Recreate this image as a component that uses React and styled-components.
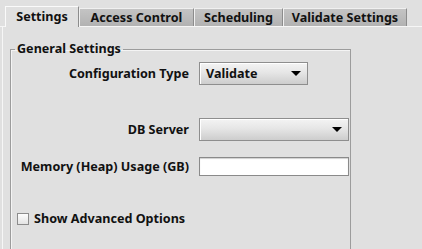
import styled, { createGlobalStyle } from "styled-components";

const GlobalStyle = createGlobalStyle`
  html, body {
    margin: 0;
    padding: 0;
    background: #e0e0e0;
  }
  * {
    box-sizing: border-box;
  }
`;

const tabs = [
  { label: "Settings", width: 74 },
  { label: "Access Control", width: 115 },
  { label: "Scheduling", width: 89 },
  { label: "Validate Settings", width: 124 },
];

function App() {
  return (
    <Page>
      <GlobalStyle />
      <TabStrip>
        {tabs.map((t, i) => (
          <Tab key={t.label} $active={i === 0} $width={t.width}>
            {t.label}
          </Tab>
        ))}
      </TabStrip>
      <Panel>
        <Group>
          <Legend>General Settings</Legend>
          <Row $top={5}>
            <Label>Configuration Type</Label>
            <Combo $width={109}>
              <span>Validate</span>
              <Arrow />
            </Combo>
          </Row>
          <Row $top={33}>
            <Label>DB Server</Label>
            <Combo $width={150}>
              <span></span>
              <Arrow />
            </Combo>
          </Row>
          <Row $top={16}>
            <Label>Memory (Heap) Usage (GB)</Label>
            <TextField />
          </Row>
          <CheckRow>
            <CheckBox />
            <span>Show Advanced Options</span>
          </CheckRow>
        </Group>
      </Panel>
    </Page>
  );
}

export default App;

const Page = styled.div`
  width: 422px;
  height: 249px;
  overflow: hidden;
  background: #e0e0e0;
  font-family: "Noto Sans", "DejaVu Sans", sans-serif;
  font-weight: 700;
  font-size: 12.6px;
  color: #111;
`;

const TabStrip = styled.div`
  display: flex;
  align-items: flex-end;
  height: 27px;
  padding-left: 5px;
  border-bottom: 1px solid #f6f6f6;
`;

const Tab = styled.div`
  width: ${(p) => p.$width}px;
  height: ${(p) => (p.$active ? "21px" : "18px")};
  display: flex;
  align-items: center;
  justify-content: center;
  line-height: 16px;
  padding-top: ${(p) => (p.$active ? "0" : "1px")};
  background: ${(p) =>
    p.$active ? "#e0e0e0" : "linear-gradient(#c4c4c4, #b2b2b2)"};
  border-top: 1px solid ${(p) => (p.$active ? "#fafafa" : "#f0f0f0")};
  border-left: 1px solid ${(p) => (p.$active ? "#fafafa" : "#f0f0f0")};
  border-right: 1px solid #8c8c8c;
  margin-bottom: ${(p) => (p.$active ? "-1px" : "0")};
  white-space: nowrap;
`;

const Panel = styled.div`
  height: 222px;
  margin-left: 2px;
  border-left: 1px solid #f6f6f6;
  padding-top: 14px;
  padding-left: 7px;
`;

const Group = styled.fieldset`
  margin: 0;
  padding: 0;
  width: 341px;
  height: 240px;
  border: 1px solid #9c9c9c;
  box-shadow: inset 1px 1px 0 #f4f4f4;
  display: flex;
  flex-direction: column;
`;

const Legend = styled.legend`
  margin-left: 4px;
  padding: 0 2px;
  line-height: 16px;
`;

const Row = styled.div`
  display: grid;
  grid-template-columns: 178px auto;
  column-gap: 10px;
  align-items: center;
  margin-top: ${(p) => p.$top}px;
`;

const Label = styled.div`
  text-align: right;
  white-space: nowrap;
`;

const Combo = styled.div`
  width: ${(p) => p.$width}px;
  height: 23px;
  display: flex;
  align-items: center;
  justify-content: space-between;
  padding: 0 6px 0 6px;
  border: 1px solid #8e8e8e;
  box-shadow: inset 1px 1px 0 #ffffff;
  background: linear-gradient(#f4f4f4 0%, #e6e6e6 45%, #cdcdcd 100%);
`;

const Arrow = styled.div`
  width: 0;
  height: 0;
  border-left: 5px solid transparent;
  border-right: 5px solid transparent;
  border-top: 5px solid #000;
`;

const TextField = styled.div`
  width: 150px;
  height: 19px;
  border: 1px solid #8a8a8a;
  background: #fff;
  box-shadow: inset 0 1px 1px #d0d0d0;
`;

const CheckRow = styled.div`
  display: flex;
  align-items: center;
  gap: 5px;
  margin-top: 34px;
  margin-left: 6px;
`;

const CheckBox = styled.div`
  width: 12px;
  height: 12px;
  border: 1px solid #8c8c8c;
  background: linear-gradient(#fdfdfd, #e4e4e4);
`;
